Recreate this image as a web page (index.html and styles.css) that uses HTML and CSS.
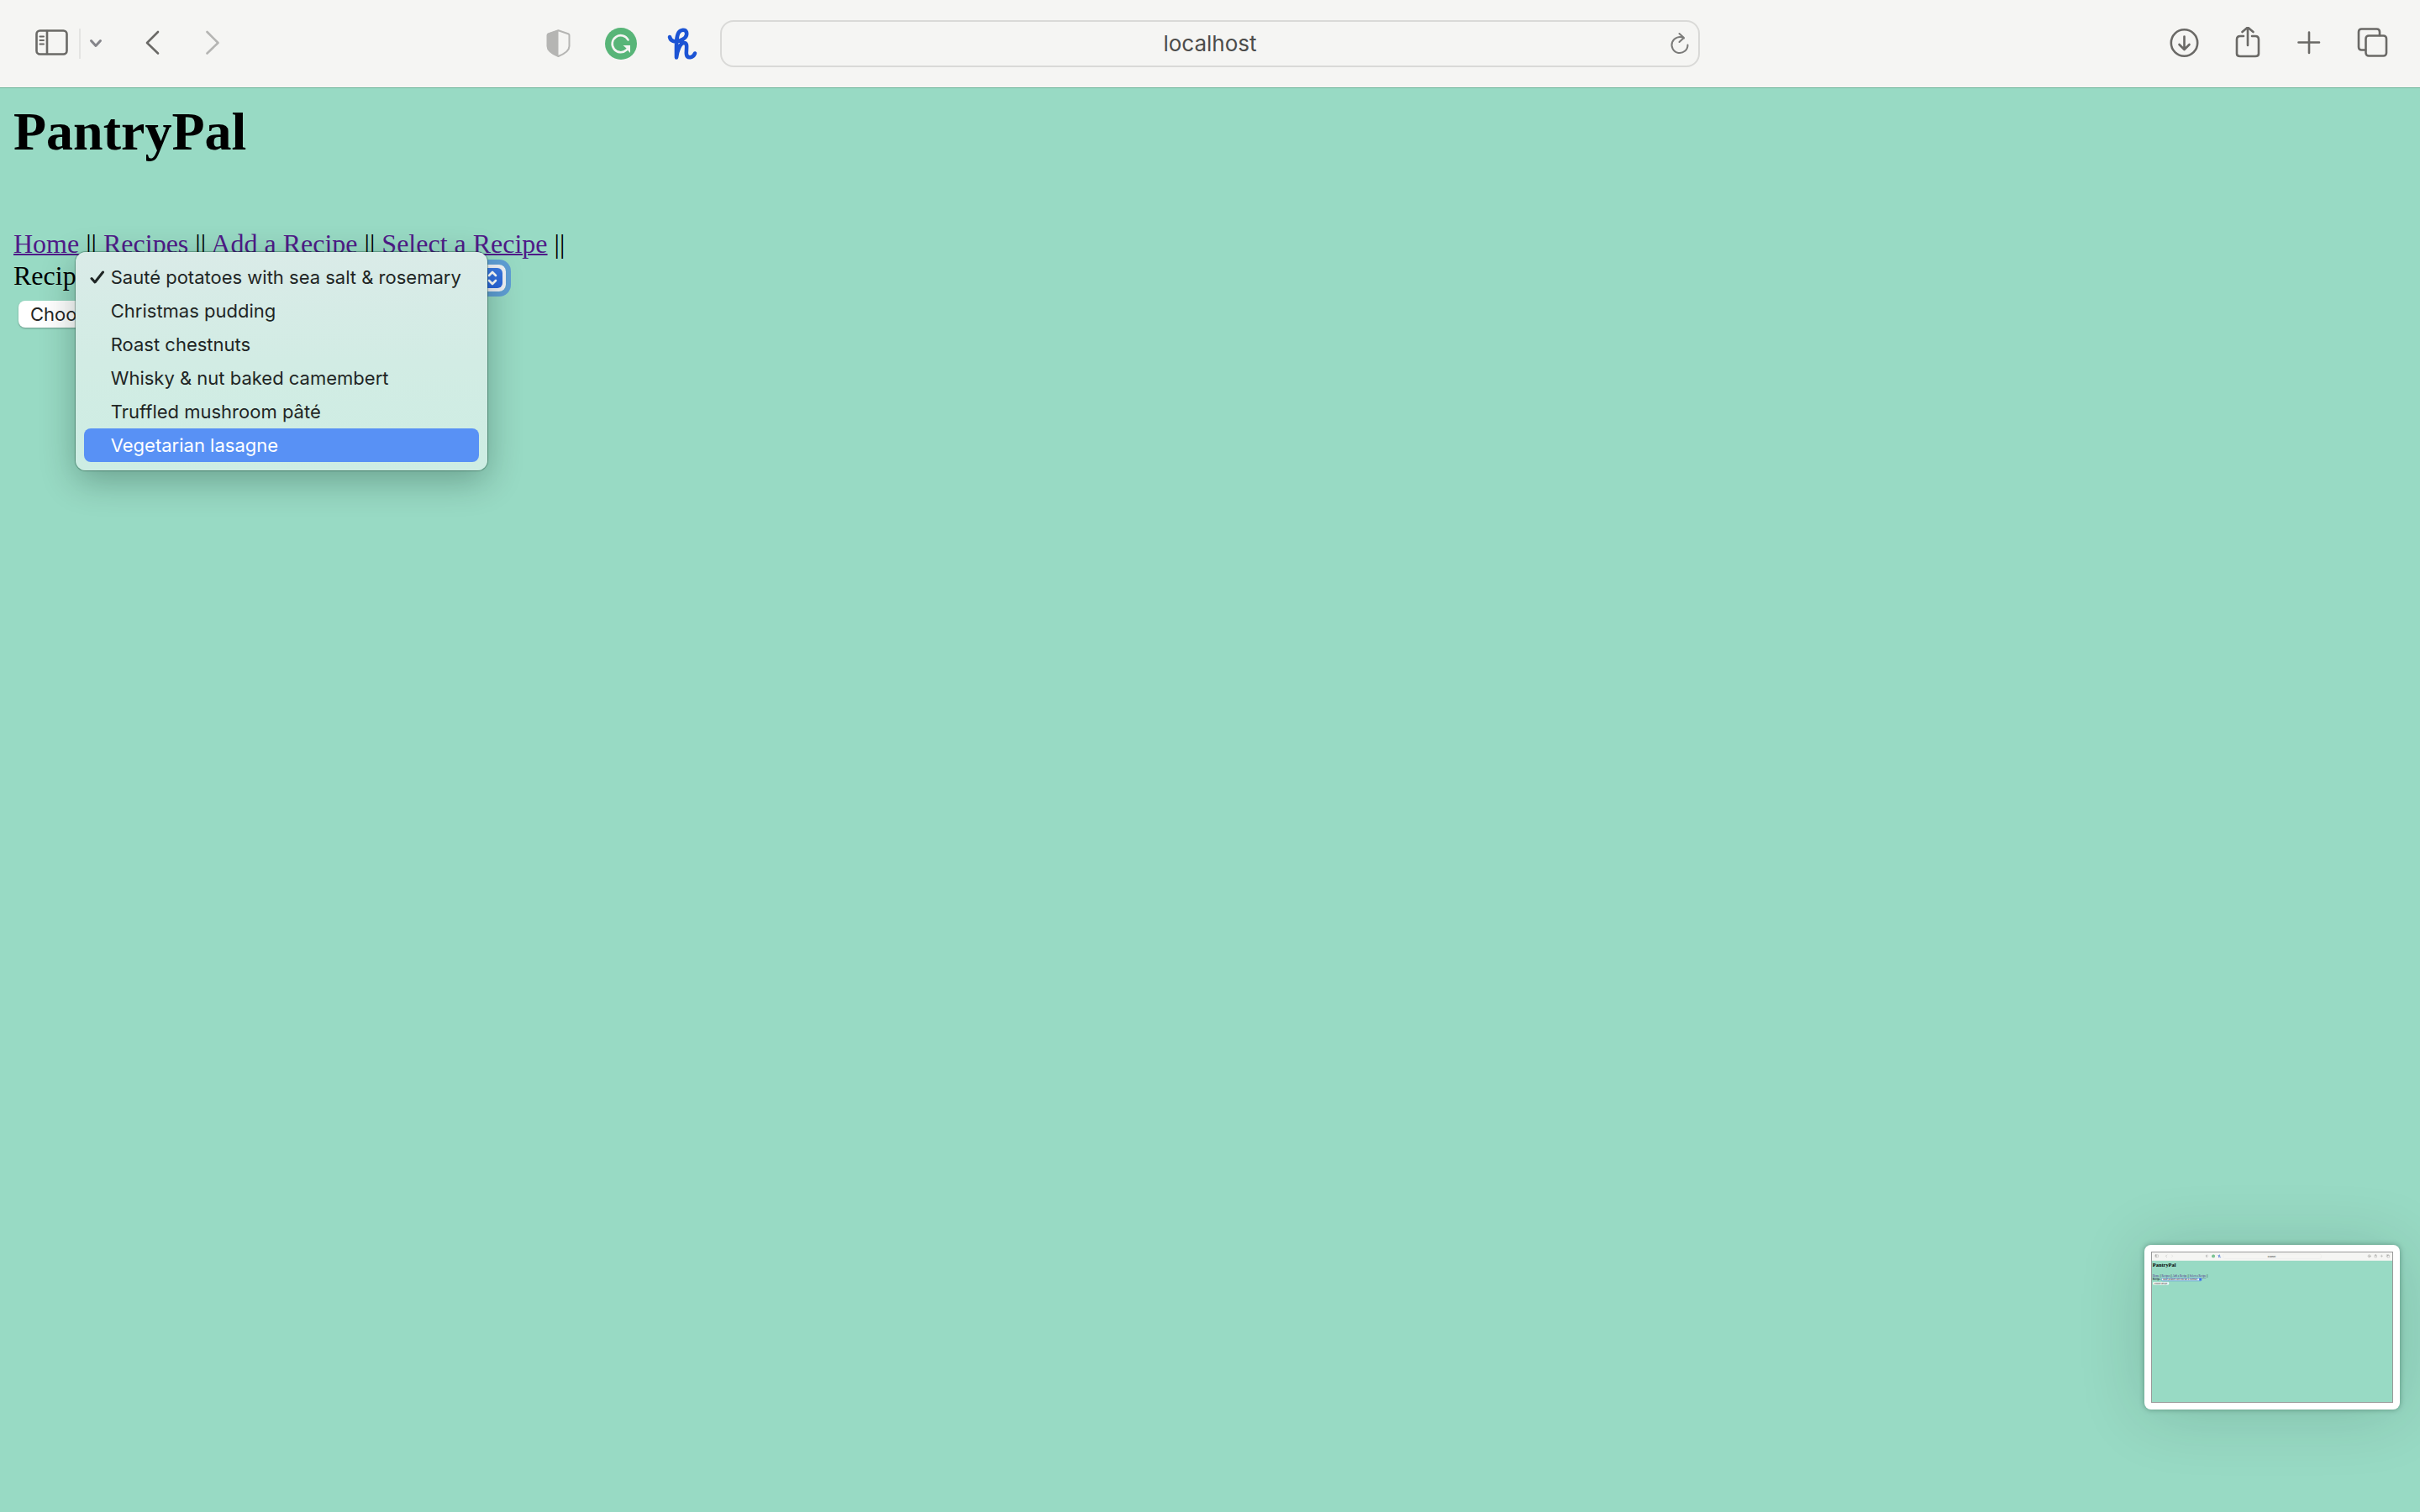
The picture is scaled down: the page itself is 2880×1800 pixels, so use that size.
FILE: index.html
```html
<!DOCTYPE html>
<html lang="en">
<head>
<meta charset="utf-8">
<title>PantryPal</title>
<link rel="stylesheet" href="styles.css">
</head>
<body>
<header class="toolbar">
  <div class="toolbar-side">
    <button class="tool" aria-label="Show sidebar"><svg class="icon" viewBox="0 0 40 40"><g id="i-sidebar"><rect x="1.500" y="4.500" width="36" height="28" rx="4"/><path d="M14 5v27"/><path class="thin" d="M5.500 11.500h4.500M5.500 16h4.500M5.500 20.500h4.500"/></g></svg></button>
    <span class="divider"></span>
    <button class="tool" aria-label="Tab groups"><svg class="icon icon-small" viewBox="0 0 16 40"><path class="muted" d="M2.500 16.500l5.500 6 5.500-6"/></svg></button>
    <button class="tool tool-back" aria-label="Back"><svg class="icon" viewBox="0 0 40 40"><path id="i-back" d="M27 6L14 19l13 12.500"/></svg></button>
    <button class="tool tool-forward" aria-label="Forward" disabled><svg class="icon" viewBox="0 0 40 40"><path id="i-forward" class="faint" d="M13.500 6l13 13-13 12.500"/></svg></button>
    <div class="extensions">
      <button class="tool" aria-label="Privacy report"><svg class="icon" viewBox="0 0 40 40"><g id="i-shield"><path class="shield" d="M19.500 4.200l11.700 4q1.300.5 1.300 1.800v13c0 6-8 10-13 12-5-2-13-6-13-12V10q0-1.300 1.300-1.800z"/><path class="shield-fill" d="M19.500 3.500L7 8q-1 .5-1 2v13c0 7 9 10.500 13.500 12.500z"/></g></svg></button>
      <button class="tool" aria-label="Grammarly"><svg class="icon" viewBox="0 0 40 40"><g id="i-grammar"><circle class="green" cx="20" cy="20" r="19"/><path class="white" d="M28.500 15.500A10 10 0 1 0 26.500 27.500"/><path class="white-fill" d="M22.500 22h8.500v9l-3-3.200-3 1.200 1.500-3.500z"/></g></svg></button>
      <button class="tool" aria-label="Honey"><svg class="icon" viewBox="0 0 40 40"><path id="i-honey" class="honey" d="M4 12c1 5 6 6.500 12 4.500 6-2 9-6 8-10-1.200-4-7-3.500-9.500.5-3 5-2.500 15-2.500 29.500 1-8 4-17 9-17.500 5.500 0 2 9 3 14 1 5 8 4 10-1.500"/></svg></button>
    </div>
  </div>
  <form class="address">
    <input class="address-input" type="text" value="localhost" aria-label="Address">
    <button class="reload" type="button" aria-label="Reload"><svg class="reload-icon" viewBox="0 0 24 28"><path d="M17 7.500A9.500 9.500 0 1 0 21.500 15.500M11.500 2l5.500 5-5.500 5"/></svg></button>
  </form>
  <div class="toolbar-side toolbar-end">
    <button class="tool" aria-label="Downloads"><svg class="icon" viewBox="0 0 40 40"><g id="i-download"><circle cx="20.500" cy="19" r="15.700"/><path d="M20.500 11.500v15M14.500 21l6 6 6-6"/></g></svg></button>
    <button class="tool" aria-label="Share"><svg class="icon" viewBox="0 0 40 40"><g id="i-share"><path d="M16 11h-4q-4 0-4 4v17q0 3 4 3h18q4 0 4-3V15q0-4-4-4h-4M21 22V1M14.500 6l6.500-5.500L27.500 6"/></g></svg></button>
    <button class="tool" aria-label="New tab"><svg class="icon" viewBox="0 0 40 40"><path id="i-plus" d="M19 6.500v24.500M6.500 18.500h24.500"/></svg></button>
    <button class="tool" aria-label="Show all tabs"><svg class="icon" viewBox="0 0 40 40"><g id="i-tabs"><rect x="11.500" y="10.500" width="24.500" height="24" rx="3.500"/><path d="M28 10V6q0-3.500-3.500-3.500h-18Q3 2.500 3 6v18q0 3.500 3.500 3.500H11"/></g></svg></button>
  </div>
</header>
<main class="page">
  <h1 class="title">PantryPal</h1>
  <nav class="links"><a href="#home">Home</a> || <a href="#recipes">Recipes</a> || <a href="#add">Add a Recipe</a> || <a href="#select">Select a Recipe</a> ||</nav>
  <form>
    <div class="field">
      <label for="recipe">Recipe:</label>
      <div class="picker">
        <select class="picker-select" id="recipe">
          <option>Sauté potatoes with sea salt &amp; rosemary</option>
          <option>Christmas pudding</option>
          <option>Roast chestnuts</option>
          <option>Whisky &amp; nut baked camembert</option>
          <option>Truffled mushroom pâté</option>
          <option>Vegetarian lasagne</option>
        </select>
        <svg class="picker-arrows" viewBox="0 0 24 24"><path d="M8 9l4-4 4 4M8 15l4 4 4-4"/></svg>
        <ul class="menu" role="listbox" aria-label="Recipe">
          <li class="menu-item" role="option" aria-selected="true"><svg class="check" viewBox="0 0 18 18"><path d="M2 10.500l4 4.500L15.500 3"/></svg>Sauté potatoes with sea salt &amp; rosemary</li>
          <li class="menu-item" role="option">Christmas pudding</li>
          <li class="menu-item" role="option">Roast chestnuts</li>
          <li class="menu-item" role="option">Whisky &amp; nut baked camembert</li>
          <li class="menu-item" role="option">Truffled mushroom pâté</li>
          <li class="menu-item menu-item-active" role="option">Vegetarian lasagne</li>
        </ul>
      </div>
    </div>
    <button class="submit" type="button">Choose Recipe</button>
  </form>
</main>
<aside class="preview" aria-label="Screenshot preview">
  <svg class="preview-image" viewBox="0 0 2860 1780">
    <rect class="p-page" width="2860" height="1780"/>
    <rect class="p-bar" width="2860" height="98"/>
    <g class="icon">
      <use href="#i-sidebar" x="38" y="24"/><use href="#i-back" x="150" y="24"/><use href="#i-forward" x="222" y="24"/>
      <use href="#i-shield" x="636" y="24"/><use href="#i-grammar" x="711" y="24"/><use href="#i-honey" x="784" y="24"/>
      <use href="#i-download" x="2566" y="24"/><use href="#i-share" x="2641" y="24"/><use href="#i-plus" x="2715" y="24"/><use href="#i-tabs" x="2790" y="24"/>
    </g>
    <rect class="p-address" x="848" y="18" width="1166" height="56" rx="16"/>
    <text class="p-sans" x="1378" y="55">localhost</text>
    <text class="p-title" x="8" y="170">PantryPal</text>
    <text class="p-link" x="8" y="293"><tspan class="p-a">Home</tspan> || <tspan class="p-a">Recipes</tspan> || <tspan class="p-a">Add a Recipe</tspan> || <tspan class="p-a">Select a Recipe</tspan> ||</text>
    <text class="p-link" x="8" y="332">Recipe:</text>
    <rect class="p-select" x="114" y="306" width="476" height="32" rx="10"/>
    <rect class="p-knob" x="562" y="308" width="26" height="28" rx="6"/>
    <text class="p-sans" x="130" y="331">Sauté potatoes with sea salt &amp; rosemary</text>
    <rect class="p-button" x="12" y="352" width="190" height="32" rx="8"/>
    <text class="p-sans" x="26" y="377">Choose Recipe</text>
  </svg>
</aside>
</body>
</html>
```
FILE: styles.css
```css
* { box-sizing: border-box; }

body {
  margin: 0;
  min-height: 100vh;
  position: relative;
  background: #98dac4;
  color: #000;
  font: 32px/38px "Liberation Serif", serif;
}

button, input, select { font-family: Inter, sans-serif; }

/* Browser toolbar */
.toolbar {
  display: grid;
  grid-template-columns: 857fr 1166fr 857fr;
  align-items: center;
  height: 105px;
  background: #f5f5f3;
  border-bottom: 1px solid #6cb499;
}
.toolbar-side {
  display: flex;
  align-items: center;
  padding-left: 42px;
}
.toolbar-end {
  justify-content: flex-end;
  gap: 35px;
  padding: 0 36px 0 0;
}
.tool, .reload {
  display: block;
  padding: 0;
  border: 0;
  background: none;
}
.icon {
  display: block;
  width: 40px;
  height: 40px;
  fill: none;
  stroke: #6a6966;
  stroke-width: 2.6;
  stroke-linecap: round;
  stroke-linejoin: round;
}
.icon-small { width: 16px; }
.thin { stroke-width: 2; }
.muted { stroke: #85858a; stroke-width: 3; }
.faint { stroke: #b5b5b3; }
.shield { stroke: #b5b5b3; stroke-width: 2; }
.shield-fill { fill: #b5b5b3; stroke: none; }
.green { fill: #58b578; stroke: none; }
.white { stroke: #f5f5f3; }
.white-fill { fill: #f5f5f3; stroke: none; }
.honey { stroke: #1c54d4; stroke-width: 4.6; }
.divider {
  width: 2px;
  height: 36px;
  margin: 0 10px 0 12px;
  background: #e4e4e2;
}
.tool-back { margin-left: 39px; }
.tool-forward { margin-left: 32px; }
.extensions {
  display: flex;
  gap: 34px;
  margin-left: auto;
  padding-right: 24px;
}
.address {
  display: flex;
  align-items: center;
  height: 56px;
  padding: 0 10px 0 34px;
  border: 2px solid #d9d9d7;
  border-radius: 16px;
}
.address-input {
  flex: 1;
  min-width: 0;
  padding: 0;
  border: 0;
  outline: 0;
  background: none;
  color: #4c4c4b;
  font-size: 26px;
  line-height: 32px;
  text-align: center;
}
.reload-icon {
  display: block;
  width: 24px;
  height: 28px;
  fill: none;
  stroke: #7b7b79;
  stroke-width: 2;
  stroke-linecap: round;
  stroke-linejoin: round;
}

/* Page */
.page { padding: 16px; }
.title {
  margin: 0 0 78px;
  font-size: 64px;
  line-height: 72px;
}
.links a {
  color: #4f1b88;
  text-decoration-thickness: 2px;
}
.field {
  display: flex;
  align-items: flex-end;
  gap: 12px;
  height: 38px;
}
.picker { position: relative; }
.picker-select {
  display: block;
  width: 476px;
  height: 32px;
  padding: 0 16px;
  border: 0;
  border-radius: 8px;
  outline: 6px solid #5f9ed5;
  appearance: none;
  background: #f0f1f6;
  color: #222;
  font-size: 22px;
}
.picker-arrows {
  position: absolute;
  top: 4px;
  right: 4px;
  width: 24px;
  height: 24px;
  border-radius: 6px;
  background: linear-gradient(#3b78e0, #2763dc);
  fill: none;
  stroke: #fff;
  stroke-width: 2.6;
  stroke-linecap: round;
  stroke-linejoin: round;
}
.menu {
  position: absolute;
  top: -15px;
  left: -36px;
  z-index: 1;
  min-width: 490px;
  margin: 0;
  padding: 10px;
  border-radius: 12px;
  list-style: none;
  background: linear-gradient(#daebe8, #d2ece4 50%, #cdede3);
  box-shadow: 0 0 1px 1px rgba(0, 50, 30, 0.35), 0 12px 42px rgba(0, 30, 20, 0.3);
}
.menu-item {
  position: relative;
  height: 40px;
  padding-left: 32px;
  border-radius: 8px;
  color: #1f2625;
  font: 22px/40px Inter, sans-serif;
  white-space: nowrap;
}
.menu-item-active {
  background: #5891f5;
  color: #fff;
}
.check {
  position: absolute;
  top: 11px;
  left: 7px;
  width: 18px;
  height: 18px;
  fill: none;
  stroke: #1f2625;
  stroke-width: 3;
  stroke-linecap: round;
  stroke-linejoin: round;
}
.submit {
  display: block;
  height: 32px;
  margin: 11px 0 0 6px;
  padding: 0 14px;
  border: 0;
  border-radius: 8px;
  background: #fff;
  box-shadow: 0 1px 2px rgba(0, 0, 0, 0.3);
  color: #252525;
  font-size: 22px;
  line-height: 32px;
}

/* Floating screenshot preview */
.preview {
  position: absolute;
  right: 24px;
  bottom: 122px;
  width: 304px;
  padding: 8px;
  border-radius: 8px;
  background: #fff;
  box-shadow: 0 0 6px rgba(0, 40, 25, 0.35), 0 4px 80px rgba(0, 40, 25, 0.16);
}
.preview-image {
  display: block;
  width: 100%;
  height: 180px;
  border: 1px solid #999;
}
.p-page { fill: #98dac4; }
.p-bar { fill: #f5f5f3; }
.p-address { fill: none; stroke: #e4e4e2; stroke-width: 3; }
.p-select { fill: #f0f4fb; stroke: #5f9ed5; stroke-width: 8; }
.p-knob { fill: #2f6bea; }
.p-button { fill: #fff; }
.p-title { font: bold 64px "Liberation Serif", serif; }
.p-link { font: 32px "Liberation Serif", serif; }
.p-a { fill: #4f1b88; text-decoration: underline; }
.p-sans { font: 22px Inter, sans-serif; fill: #222; }
```
